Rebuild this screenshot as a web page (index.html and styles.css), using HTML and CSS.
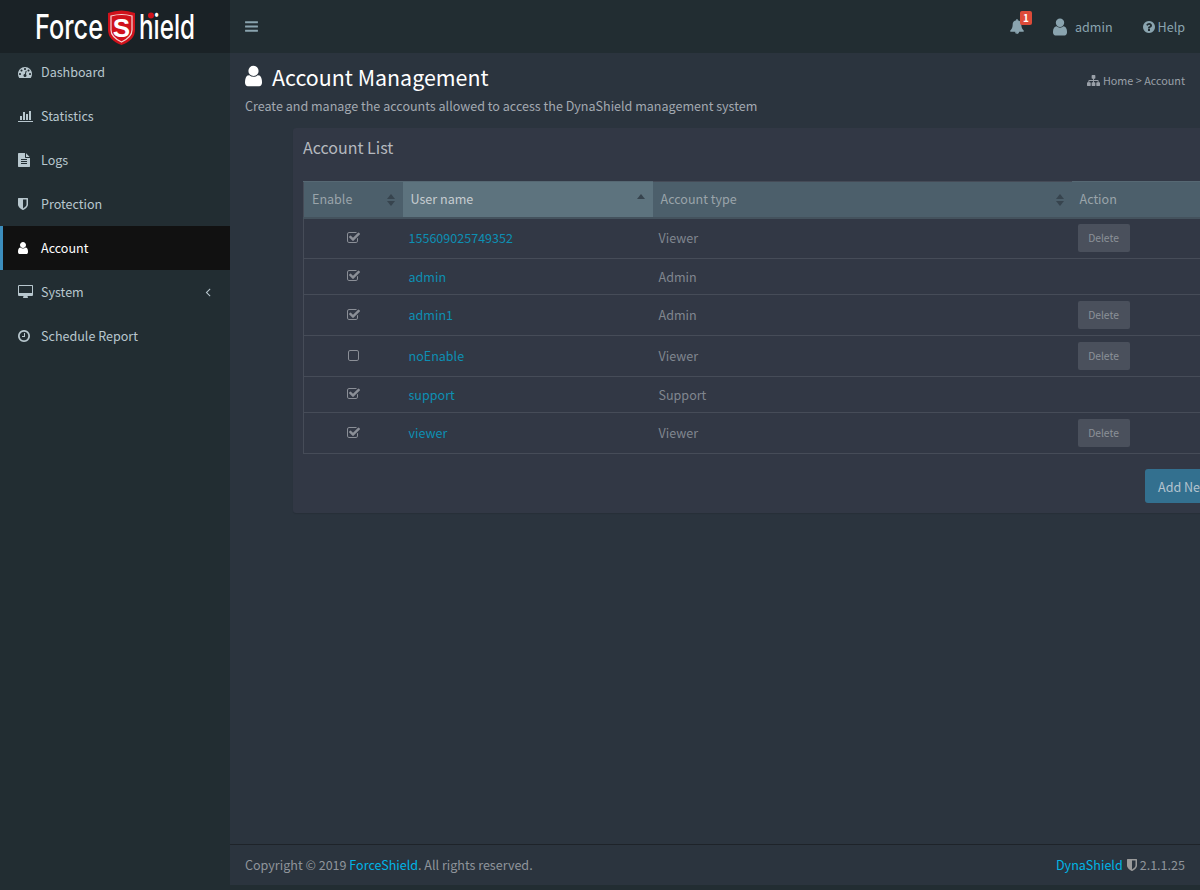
FILE: index.html
```html
<!DOCTYPE html>
<html lang="en">
<head>
    <meta charset="UTF-8">
    <meta name="viewport" content="width=device-width, initial-scale=1.0">
    <title>Account Management</title>
    <link rel="stylesheet" href="styles.css">
</head>
<body>
    <svg class="icon-defs" xmlns="http://www.w3.org/2000/svg">
        <symbol id="i-user" viewBox="256 0 1280 1792"><path d="M1536 1399q0 109-62.5 187t-150.5 78h-853q-88 0-150.5-78t-62.5-187q0-85 8.5-160.5t31.5-152 58.5-131 94-89 134.5-34.5q131 128 313 128t313-128q76 0 134.5 34.5t94 89 58.5 131 31.5 152 8.5 160.5zm-256-887q0 159-112.5 271.5t-271.5 112.5-271.5-112.5-112.5-271.5 112.5-271.5 271.5-112.5 271.5 112.5 112.5 271.5z"/></symbol>
        <symbol id="i-bars" viewBox="128 0 1536 1792"><path d="M1664 1344v128q0 26-19 45t-45 19h-1408q-26 0-45-19t-19-45v-128q0-26 19-45t45-19h1408q26 0 45 19t19 45zm0-512v128q0 26-19 45t-45 19h-1408q-26 0-45-19t-19-45v-128q0-26 19-45t45-19h1408q26 0 45 19t19 45zm0-512v128q0 26-19 45t-45 19h-1408q-26 0-45-19t-19-45v-128q0-26 19-45t45-19h1408q26 0 45 19t19 45z"/></symbol>
        <symbol id="i-gauge" viewBox="0 0 1792 1792"><path d="M384 1152q0-53-37.5-90.5t-90.5-37.5-90.5 37.5-37.5 90.5 37.5 90.5 90.5 37.5 90.5-37.5 37.5-90.5zm192-448q0-53-37.5-90.5t-90.5-37.5-90.5 37.5-37.5 90.5 37.5 90.5 90.5 37.5 90.5-37.5 37.5-90.5zm428 481l101-382q6-26-7.5-48.5t-38.5-29.5-48 6.5-30 39.5l-101 382q-60 5-107 43.5t-63 98.5q-20 77 20 146t117 89 146-20 89-117q16-60-6-117t-72-91zm660-33q0-53-37.5-90.5t-90.5-37.5-90.5 37.5-37.5 90.5 37.5 90.5 90.5 37.5 90.5-37.5 37.5-90.5zm-640-640q0-53-37.5-90.5t-90.5-37.5-90.5 37.5-37.5 90.5 37.5 90.5 90.5 37.5 90.5-37.5 37.5-90.5zm448 192q0-53-37.5-90.5t-90.5-37.5-90.5 37.5-37.5 90.5 37.5 90.5 90.5 37.5 90.5-37.5 37.5-90.5zm320 448q0 261-141 483-19 29-54 29h-1402q-35 0-54-29-141-221-141-483 0-182 71-348t191-286 286-191 348-71 348 71 286 191 191 286 71 348z"/></symbol>
        <symbol id="i-chart" viewBox="0 0 2048 1792"><path d="M512 896v512h-256v-512h256zm384-512v1024h-256v-1024h256zm1024 1152v128h-2048v-1536h128v1408h1920zm-640-896v768h-256v-768h256zm384-384v1152h-256v-1152h256z"/></symbol>
        <symbol id="i-file" viewBox="128 0 1536 1792"><path d="M1596 476q14 14 28 36h-472v-472q22 14 36 28zm-476 164h544v1056q0 40-28 68t-68 28h-1344q-40 0-68-28t-28-68v-1600q0-40 28-68t68-28h800v544q0 40 28 68t68 28zm160 736v-64q0-14-9-23t-23-9h-704q-14 0-23 9t-9 23v64q0 14 9 23t23 9h704q14 0 23-9t9-23zm0-256v-64q0-14-9-23t-23-9h-704q-14 0-23 9t-9 23v64q0 14 9 23t23 9h704q14 0 23-9t9-23zm0-256v-64q0-14-9-23t-23-9h-704q-14 0-23 9t-9 23v64q0 14 9 23t23 9h704q14 0 23-9t9-23z"/></symbol>
        <symbol id="i-shield" viewBox="256 0 1280 1792"><path d="M1344 960v-640h-448v1137q119-63 213-137 235-184 235-360zm192-768v768q0 86-33.5 170.5t-83 150-118 127.5-126.5 103-121 77.5-89.5 49.5-42.5 20q-12 6-26 6t-26-6q-16-7-42.5-20t-89.5-49.5-121-77.5-126.5-103-118-127.5-83-150-33.5-170.5v-768q0-26 19-45t45-19h1152q26 0 45 19t19 45z"/></symbol>
        <symbol id="i-desktop" viewBox="64 0 1920 1792"><path d="M1856 992v-832q0-13-9.5-22.5t-22.5-9.5h-1600q-13 0-22.5 9.5t-9.5 22.5v832q0 13 9.5 22.5t22.5 9.5h1600q13 0 22.5-9.5t9.5-22.5zm128-832v1088q0 66-47 113t-113 47h-544q0 37 16 77.5t32 71 16 43.5q0 26-19 45t-45 19h-512q-26 0-45-19t-19-45q0-14 16-44t32-70 16-78h-544q-66 0-113-47t-47-113v-1088q0-66 47-113t113-47h1632q66 0 113 47t47 113z"/></symbol>
        <symbol id="i-clock" viewBox="128 0 1536 1792"><path d="M1024 544v448q0 14-9 23t-23 9h-320q-14 0-23-9t-9-23v-64q0-14 9-23t23-9h224v-352q0-14 9-23t23-9h64q14 0 23 9t9 23zm416 352q0-148-73-273t-198-198-273-73-273 73-198 198-73 273 73 273 198 198 273 73 273-73 198-198 73-273zm224 0q0 209-103 385.5t-279.5 279.5-385.5 103-385.5-103-279.5-279.5-103-385.5 103-385.5 279.5-279.5 385.5-103 385.5 103 279.5 279.5 103 385.5z"/></symbol>
        <symbol id="i-bell" viewBox="64 0 1664 1792"><path d="M912 1696q0-16-16-16-59 0-101.5-42.5t-42.5-101.5q0-16-16-16t-16 16q0 73 51.5 124.5t124.5 51.5q16 0 16-16zm816-288q0 52-38 90t-90 38h-448q0 106-75 181t-181 75-181-75-75-181h-448q-52 0-90-38t-38-90q50-42 91-88t85-119.5 74.5-158.5 50-206 19.5-260q0-152 117-282.5t307-158.5q-8-19-8-39 0-40 28-68t68-28 68 28 28 68q0 20-8 39 190 28 307 158.5t117 282.5q0 139 19.5 260t50 206 74.5 158.5 85 119.5 91 88z"/></symbol>
        <symbol id="i-help" viewBox="128 0 1536 1792"><path d="M1024 1376v-192q0-14-9-23t-23-9h-192q-14 0-23 9t-9 23v192q0 14 9 23t23 9h192q14 0 23-9t9-23zm256-672q0-88-55.5-163t-138.5-116-170-41q-243 0-371 213-15 24 8 42l132 100q7 6 19 6 16 0 25-12 53-68 86-92 34-24 86-24 48 0 85.5 26t37.5 59q0 38-20 61t-68 45q-63 28-115.5 86.5t-52.5 125.5v36q0 14 9 23t23 9h192q14 0 23-9t9-23q0-19 21.5-49.5t54.5-49.5q32-18 49-28.5t46-35 44.5-48 28-60.5 12.5-81zm384 192q0 209-103 385.5t-279.5 279.5-385.5 103-385.5-103-279.5-279.5-103-385.5 103-385.5 279.5-279.5 385.5-103 385.5 103 279.5 279.5 103 385.5z"/></symbol>
        <symbol id="i-sitemap" viewBox="0 0 1792 1792"><path d="M1792 1248v320q0 40-28 68t-68 28h-320q-40 0-68-28t-28-68v-320q0-40 28-68t68-28h96v-192h-512v192h96q40 0 68 28t28 68v320q0 40-28 68t-68 28h-320q-40 0-68-28t-28-68v-320q0-40 28-68t68-28h96v-192h-512v192h96q40 0 68 28t28 68v320q0 40-28 68t-68 28h-320q-40 0-68-28t-28-68v-320q0-40 28-68t68-28h96v-192q0-52 38-90t90-38h512v-192h-96q-40 0-68-28t-28-68v-320q0-40 28-68t68-28h320q40 0 68 28t28 68v320q0 40-28 68t-68 28h-96v192h512q52 0 90 38t38 90v192h96q40 0 68 28t28 68z"/></symbol>
        <symbol id="i-check" viewBox="64 0 1664 1792"><path d="M1472 930v318q0 119-84.5 203.5t-203.5 84.5h-832q-119 0-203.5-84.5t-84.5-203.5v-832q0-119 84.5-203.5t203.5-84.5h832q63 0 117 25 15 7 18 23 3 17-9 29l-49 49q-10 10-23 10-3 0-9-2-23-6-45-6h-832q-66 0-113 47t-47 113v832q0 66 47 113t113 47h832q66 0 113-47t47-113v-254q0-13 9-22l64-64q10-10 23-10 6 0 12 3 20 8 20 29zm231-489l-814 814q-24 24-57 24t-57-24l-430-430q-24-24-24-57t24-57l110-110q24-24 57-24t57 24l263 263 647-647q24-24 57-24t57 24l110 110q24 24 24 57t-24 57z"/></symbol>
        <symbol id="i-square" viewBox="192 0 1408 1792"><path d="M1312 256h-832q-66 0-113 47t-47 113v832q0 66 47 113t113 47h832q66 0 113-47t47-113v-832q0-66-47-113t-113-47zm288 160v832q0 119-84.5 203.5t-203.5 84.5h-832q-119 0-203.5-84.5t-84.5-203.5v-832q0-119 84.5-203.5t203.5-84.5h832q119 0 203.5 84.5t84.5 203.5z"/></symbol>
        <symbol id="i-angle" viewBox="0 0 1792 1792"><path d="M1203 544q0 13-10 23l-393 393 393 393q10 10 10 23t-10 23l-50 50q-10 10-23 10t-23-10l-466-466q-10-10-10-23t10-23l466-466q10-10 23-10t23 10l50 50q10 10 10 23z"/></symbol>
    </svg>

    <div class="wrapper">
        <aside class="sidebar">
            <div class="logo">
                <svg class="logo-art" viewBox="0 0 160 36" width="160" height="36" xmlns="http://www.w3.org/2000/svg">
                    <text class="logo-word" x="0" y="30" textLength="85" lengthAdjust="spacingAndGlyphs" transform="scale(0.8 1)">Force</text>
                    <path d="M73 4 q13.5-5 27 0 v17 q0 10-13.5 15 q-13.5-5-13.5-15z" fill="#d0121b"/>
                    <path d="M76 7 q10.5-3 21 0 v14 q0 7-10.5 12 q-10.5-5-10.5-12z" fill="none" stroke="#f5d5d5" stroke-width="1.2"/>
                    <text class="logo-s" x="86.5" y="28" text-anchor="middle">S</text>
                    <text class="logo-word" x="130" y="30" textLength="70" lengthAdjust="spacingAndGlyphs" transform="scale(0.8 1)">hield</text>
                    <circle cx="116" cy="6.5" r="3" fill="#d0121b"/>
                </svg>
            </div>
            <ul class="menu">
                <li><a href="#"><svg class="icon w14"><use href="#i-gauge"/></svg>Dashboard</a></li>
                <li><a href="#"><svg class="icon w16"><use href="#i-chart"/></svg>Statistics</a></li>
                <li><a href="#"><svg class="icon w12"><use href="#i-file"/></svg>Logs</a></li>
                <li><a href="#"><svg class="icon w10"><use href="#i-shield"/></svg>Protection</a></li>
                <li class="active"><a href="#"><svg class="icon w10"><use href="#i-user"/></svg>Account</a></li>
                <li><a href="#"><svg class="icon w15"><use href="#i-desktop"/></svg>System<svg class="menu-arrow"><use href="#i-angle"/></svg></a></li>
                <li><a href="#"><svg class="icon w12"><use href="#i-clock"/></svg>Schedule Report</a></li>
            </ul>
        </aside>

        <div class="main">
            <header class="navbar">
                <svg class="nav-toggle"><use href="#i-bars"/></svg>
                <div class="nav-right">
                    <span class="nav-bell">
                        <svg class="bell-icon"><use href="#i-bell"/></svg>
                        <span class="badge">1</span>
                    </span>
                    <span class="nav-user"><svg class="user-icon"><use href="#i-user"/></svg>admin</span>
                    <span class="nav-help"><svg class="help-icon"><use href="#i-help"/></svg>Help</span>
                </div>
            </header>

            <div class="content">
                <div class="page-head">
                    <div>
                        <h1><svg class="title-icon"><use href="#i-user"/></svg>Account Management</h1>
                        <p class="subtitle">Create and manage the accounts allowed to access the DynaShield management system</p>
                    </div>
                    <div class="crumbs"><svg class="crumb-icon"><use href="#i-sitemap"/></svg>Home &gt; Account</div>
                </div>

                <section class="card">
                    <h2>Account List</h2>
                    <table class="accounts">
                        <thead>
                            <tr>
                                <th class="col-enable sortable">Enable</th>
                                <th class="col-name sorted">User name</th>
                                <th class="col-type sortable">Account type</th>
                                <th class="col-action">Action</th>
                            </tr>
                        </thead>
                        <tbody>
                            <tr>
                                <td class="cell-check"><svg class="check"><use href="#i-check"/></svg></td>
                                <td><a href="#">155609025749352</a></td>
                                <td>Viewer</td>
                                <td><button class="btn-delete">Delete</button></td>
                            </tr>
                            <tr class="short">
                                <td class="cell-check"><svg class="check"><use href="#i-check"/></svg></td>
                                <td><a href="#">admin</a></td>
                                <td>Admin</td>
                                <td></td>
                            </tr>
                            <tr>
                                <td class="cell-check"><svg class="check"><use href="#i-check"/></svg></td>
                                <td><a href="#">admin1</a></td>
                                <td>Admin</td>
                                <td><button class="btn-delete">Delete</button></td>
                            </tr>
                            <tr>
                                <td class="cell-check"><svg class="check off"><use href="#i-square"/></svg></td>
                                <td><a href="#">noEnable</a></td>
                                <td>Viewer</td>
                                <td><button class="btn-delete">Delete</button></td>
                            </tr>
                            <tr class="short">
                                <td class="cell-check"><svg class="check"><use href="#i-check"/></svg></td>
                                <td><a href="#">support</a></td>
                                <td>Support</td>
                                <td></td>
                            </tr>
                            <tr>
                                <td class="cell-check"><svg class="check"><use href="#i-check"/></svg></td>
                                <td><a href="#">viewer</a></td>
                                <td>Viewer</td>
                                <td><button class="btn-delete">Delete</button></td>
                            </tr>
                        </tbody>
                    </table>
                    <div class="card-actions">
                        <button class="btn-add">Add New</button>
                    </div>
                </section>
            </div>

            <footer class="footer">
                <span>Copyright © 2019 <a href="#">ForceShield</a>. All rights reserved.</span>
                <span class="version"><a href="#">DynaShield</a><svg class="version-icon"><use href="#i-shield"/></svg>2.1.1.25</span>
            </footer>
        </div>
    </div>
</body>
</html>
```

FILE: styles.css
```css
* {
    box-sizing: border-box;
}

html, body {
    margin: 0;
    height: 100%;
    overflow: hidden;
}

body {
    font-family: "Noto Sans CJK SC", "Noto Sans", sans-serif;
    font-size: 12.55px;
    line-height: 20px;
    background: #222d32;
    color: #b8c7ce;
}

a {
    text-decoration: none;
}

svg {
    fill: currentColor;
}

.icon-defs {
    display: none;
}

.wrapper {
    display: flex;
    height: 890px;
}

/* sidebar */
.sidebar {
    flex: 0 0 230px;
    background: #222d32;
}

.logo {
    height: 53px;
    background: #1a2226;
    padding: 9px 0 0 35px;
}

.logo-art {
    display: block;
    overflow: visible;
}

.logo-word {
    font-family: Inter, sans-serif;
    font-weight: 500;
    font-size: 34px;
    fill: #fff;
}

.logo-s {
    font-family: "Liberation Sans", sans-serif;
    font-weight: 700;
    font-size: 26px;
    fill: #fff;
}

.menu {
    list-style: none;
    margin: -3px 0 0;
    padding: 0;
}

.menu a {
    display: grid;
    grid-template-columns: 23px 1fr auto;
    align-items: center;
    height: 44px;
    padding-left: 18px;
    color: #b8c7ce;
}

.menu .active a {
    background: #111;
    color: #fff;
    border-left: 3px solid #3c8dbc;
    padding-left: 15px;
}

.icon {
    height: 14px;
}

.w10 { width: 10px; }
.w12 { width: 12px; }
.w14 { width: 14px; }
.w15 { width: 15px; }
.w16 { width: 16px; }

.menu-arrow {
    width: 14px;
    height: 14px;
    margin-right: 15px;
}

/* top bar */
.main {
    flex: 1;
    min-width: 0;
    display: flex;
    flex-direction: column;
}

.navbar {
    height: 53px;
    flex: none;
    display: flex;
    align-items: center;
    justify-content: space-between;
    background: #222d32;
    padding: 0 15px;
    color: #8aa4af;
}

.nav-toggle {
    width: 13px;
    height: 15px;
}

.nav-right {
    display: flex;
    align-items: center;
}

.nav-bell {
    position: relative;
    display: flex;
    margin-right: 29px;
}

.bell-icon {
    width: 14px;
    height: 15px;
}

.badge {
    position: absolute;
    top: -8px;
    left: 10px;
    width: 12px;
    height: 14px;
    border-radius: 2px;
    background: #dd4b39;
    color: #fff;
    font-size: 10px;
    font-weight: 700;
    line-height: 14px;
    text-align: center;
}

.nav-user {
    display: flex;
    align-items: center;
    margin-right: 30px;
}

.user-icon {
    width: 14px;
    height: 20px;
    margin-right: 8px;
}

.nav-help {
    display: flex;
    align-items: center;
}

.help-icon {
    width: 12px;
    height: 14px;
    margin-right: 3px;
}

/* page */
.content {
    flex: 1;
    padding: 0 15px;
    min-height: 0;
    background: #2b343e;
}

.page-head {
    display: flex;
    justify-content: space-between;
    padding-top: 9px;
    height: 75px;
}

h1 {
    display: flex;
    align-items: center;
    margin: 0;
    font-size: 21.4px;
    line-height: 30px;
    font-weight: 400;
    color: #fff;
}

.title-icon {
    width: 17px;
    height: 24px;
    margin-right: 10px;
    margin-top: -2px;
}

.subtitle {
    margin: 4px 0 0;
    color: #a3a9b1;
}

.crumbs {
    display: flex;
    align-items: center;
    height: 16px;
    margin-top: 10px;
    font-size: 10.8px;
    color: #9aa0a8;
}

.crumb-icon {
    width: 13px;
    height: 13px;
    margin-right: 3px;
}

.card {
    width: 1000px;
    height: 385px;
    margin-left: 48px;
    padding: 9px 10px 10px;
    background: #323845;
    border-radius: 3px;
    box-shadow: 0 1px 1px rgba(0, 0, 0, 0.1);
}

h2 {
    margin: 0;
    font-size: 16px;
    line-height: 20px;
    font-weight: 400;
    color: #b5b9bf;
}

.accounts {
    width: 980px;
    margin-top: 24px;
    border-collapse: collapse;
    table-layout: fixed;
    border-left: 1px solid #464c58;
}

.accounts th {
    position: relative;
    height: 36px;
    padding: 0 8px;
    background: #4c5f6b;
    border-top: 1px solid #566873;
    border-bottom: 2px solid #44525d;
    text-align: left;
    font-weight: 400;
    color: #9aa4aa;
}

.accounts th.col-type {
    border-top-color: #454b57;
}

.accounts th.sorted {
    background: #5d737e;
    color: #c6ccd0;
}

.col-enable {
    width: 99px;
}

.col-name {
    width: 250px;
}

.col-type {
    width: 419px;
}

.sortable::before,
.sortable::after,
.sorted::before {
    content: "";
    position: absolute;
    right: 8px;
    border-left: 4.5px solid transparent;
    border-right: 4.5px solid transparent;
}

.sortable::before,
.sorted::before {
    top: 12px;
    border-bottom: 5px solid #37444e;
}

.sortable::after {
    top: 19px;
    border-top: 5px solid #37444e;
}

.accounts td {
    height: 41px;
    padding: 0 6px;
    border-bottom: 1px solid #464c58;
    color: #80868f;
}

.accounts .short td {
    height: 36px;
}

.accounts td a {
    color: #0d8fb3;
}

.cell-check {
    text-align: center;
}

.check {
    display: block;
    width: 13px;
    height: 14px;
    margin: -1px auto 0;
    color: #8b8f97;
}

.check.off {
    width: 11px;
}

.btn-delete {
    display: block;
    width: 52px;
    height: 28px;
    margin-top: -1px;
    border: 0;
    border-radius: 2px;
    background: #4a505c;
    color: #8b9098;
    font-family: inherit;
    font-size: 10.3px;
}

.card-actions {
    padding: 15px 0 0 842px;
}

.btn-add {
    width: 100px;
    height: 34px;
    border: 0;
    border-radius: 3px;
    background: #33708f;
    color: #b4c4cf;
    font-family: inherit;
    font-size: 12.55px;
    text-align: left;
    padding-left: 13px;
}

/* footer */
.footer {
    flex: none;
    height: 41px;
    margin-bottom: 5px;
    display: flex;
    align-items: center;
    justify-content: space-between;
    padding: 0 15px;
    background: #2b343e;
    border-top: 1px solid #1e2329;
    color: #8f949b;
}

.footer a {
    color: #00b4e6;
}

.version {
    display: flex;
    align-items: center;
}

.version-icon {
    width: 10px;
    height: 14px;
    margin: 0 3px 0 4px;
    color: #9a9a9a;
}
```
